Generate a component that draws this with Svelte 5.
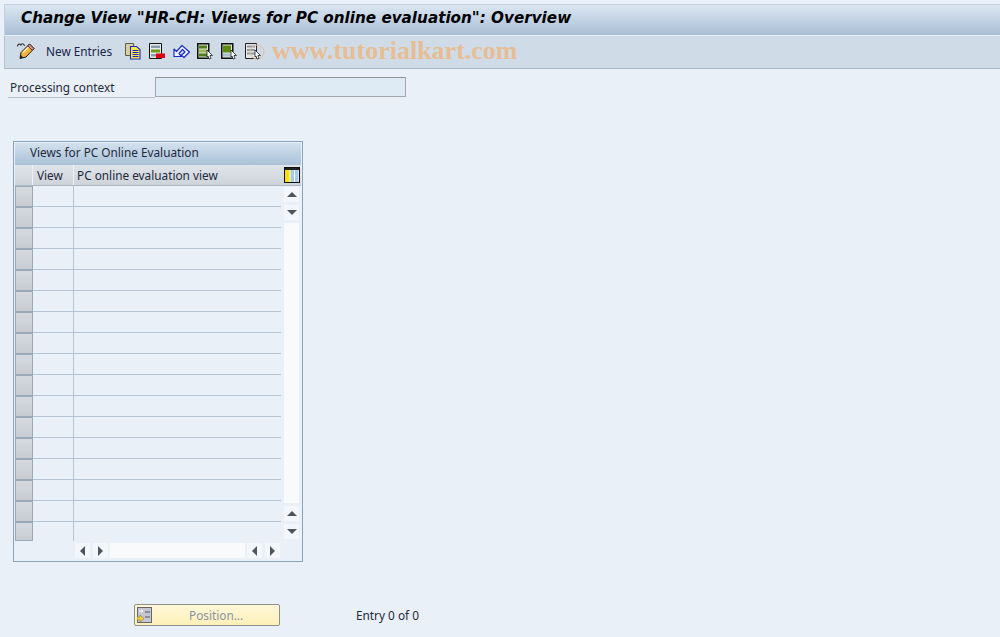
<script>
  const rows = Array.from({ length: 17 }, (_, i) => i);
</script>

<div class="screen">
  <div class="titlebar">
    <h1>Change View "HR-CH: Views for PC online evaluation": Overview</h1>
  </div>

  <div class="toolbar">
    <svg class="pencil" width="20" height="18" viewBox="0 0 20 18">
      <path d="M0.500 4.500c0-3 3-3 3.500-1 0-2.500 3-2.500 3.500 0.500" fill="none" stroke="#333" stroke-width="1.100"/>
      <path d="M3 16.500l1-6L12.500 2l4.500 4.500-8 8.500z" fill="#f6b23a" stroke="#1a1a1a" stroke-width="1"/>
      <path d="M6 10.500l7-7" stroke="#fff2b8" stroke-width="1.500"/>
      <path d="M12.500 2l4.500 4.500-1.800 1.800-4.500-4.500z" fill="#e8909a" stroke="#1a1a1a" stroke-width="0.800"/>
      <path d="M3 16.500l0.800-3.500 2.500 2.500z" fill="#222"/>
    </svg>
    <span class="tool-text">New Entries</span>
    <div class="icons">
      <svg width="24" height="17" viewBox="0 0 24 17">
        <path d="M0.500 0.500h8v3h-2v9h-6z" fill="#d8cfa0" stroke="#5c5c50"/>
        <path d="M5.500 3.500h6l3.500 3v9.500h-9.500z" fill="#ffe640" stroke="#1c2bc8" stroke-width="1.100"/>
        <path d="M7.500 7.500h6M7.500 9.500h6M7.500 11.500h6M7.500 13.500h6" stroke="#1c2bc8"/>
      </svg>
      <svg width="24" height="17" viewBox="0 0 24 17">
        <path d="M0.500 0.500h12v15h-12z" fill="#e8eaec" stroke="#111"/>
        <path d="M2 2.500h9v2.500H2zM2 11h5v2.500H2z" fill="#8a9aa8"/>
        <path d="M2 6.500h9v3H2z" fill="#6f9a18"/>
        <path d="M7 10.500h9v4.500H7z" fill="#e00010"/>
      </svg>
      <svg width="24" height="17" viewBox="0 0 24 17">
        <path d="M1 13.500V6l2.500 2.500L9 2.500l7.500 6.500-5.500 5.500-2.500-2.500 3.500-3-2.500-2.500-3.500 4 2.500 3z" fill="#f2f6fb" stroke="#1c2bc8" stroke-width="1.200" stroke-linejoin="round"/>
      </svg>
      <svg width="24" height="17" viewBox="0 0 24 17">
        <path d="M0.750 0.750h11v14.500h-11z" fill="#dfe3e0" stroke="#111" stroke-width="1.500"/>
        <path d="M2 2.500h8v3H2zM2 10.500h8v3H2z" fill="#4f7d18"/>
        <path d="M2 6.500h8v3H2z" fill="#9ab850"/>
        <path d="M10 7l5.500 5.500h-2.500l1 3-2 0.500-1-3-1 1z" fill="#fff" stroke="#222" stroke-width="0.800"/>
      </svg>
      <svg width="24" height="17" viewBox="0 0 24 17">
        <path d="M0.750 0.750h11v14.500h-11z" fill="#dfe3e0" stroke="#111" stroke-width="1.500"/>
        <path d="M2 2.500h8v7H2z" fill="#5f8a10"/>
        <path d="M2 10.500h8v3H2z" fill="#a8c0d0"/>
        <path d="M10 7l5.500 5.500h-2.500l1 3-2 0.500-1-3-1 1z" fill="#fff" stroke="#222" stroke-width="0.800"/>
      </svg>
      <svg width="24" height="17" viewBox="0 0 24 17">
        <path d="M0.500 0.500h11v15h-11z" fill="#e4e6e8" stroke="#222"/>
        <path d="M2 2.500h8v2H2zM2 6h8v2H2zM2 9.500h8v2H2z" fill="#8f9aa2"/>
        <circle cx="12" cy="9" r="7" fill="none" stroke="#e8bd94"/>
        <path d="M10 7l5.500 5.500h-2.500l1 3-2 0.500-1-3-1 1z" fill="#fff" stroke="#222" stroke-width="0.800"/>
      </svg>
    </div>
    <span class="watermark">www.tutorialkart.com</span>
  </div>

  <div class="content">
    <div class="context">
      <label for="ctx">Processing context</label>
      <input id="ctx" type="text" disabled />
    </div>

    <div class="table">
      <div class="table-title">Views for PC Online Evaluation</div>
      <div class="table-head">
        <div class="corner"></div>
        <div class="th view">View</div>
        <div class="th name">PC online evaluation view</div>
        <div class="config">
          <svg width="16" height="16" viewBox="0 0 16 16">
            <rect x="0.500" y="0.500" width="15" height="15" fill="#fff" stroke="#111"/>
            <rect x="1" y="1" width="14" height="2" fill="#222"/>
            <rect x="1" y="3" width="4.500" height="12" fill="#ffe000"/>
            <rect x="6.500" y="3" width="3.500" height="12" fill="#a8cbe8"/>
            <rect x="11" y="3" width="3.500" height="12" fill="#a8cbe8"/>
          </svg>
        </div>
      </div>
      <div class="table-body">
        <div class="rows">
          {#each rows as r}
            <div class="row">
              <div class="sel"></div>
              <div class="cell view"></div>
              <div class="cell name"></div>
            </div>
          {/each}
        </div>
        <div class="vscroll">
          <div class="sbtn"><span class="tri up"></span></div>
          <div class="sbtn"><span class="tri down"></span></div>
          <div class="track"></div>
          <div class="sbtn"><span class="tri up"></span></div>
          <div class="sbtn"><span class="tri down"></span></div>
        </div>
      </div>
      <div class="hscroll">
        <div class="sbtn"><span class="tri left"></span></div>
        <div class="sbtn"><span class="tri right"></span></div>
        <div class="htrack"></div>
        <div class="sbtn"><span class="tri left"></span></div>
        <div class="sbtn"><span class="tri right"></span></div>
      </div>
    </div>

    <div class="footer">
      <button class="position" disabled>
        <svg width="15" height="16" viewBox="0 0 15 16">
          <rect x="0.500" y="0.500" width="14" height="15" fill="#c4c6d6" stroke="#666"/>
          <path d="M8 5h5M8 10h5" stroke="#555"/>
          <path d="M2 4h4M4.500 2.500L6 4 4.500 5.500" stroke="#fff" fill="none"/>
          <path d="M0 10h3V8l4 3.500L3 15v-2H0z" fill="#f0cc40" stroke="#8a7420" stroke-width="0.500"/>
        </svg>
        <span>Position...</span>
      </button>
      <span class="entry">Entry 0 of 0</span>
    </div>
  </div>
</div>

<style>
  :global(body) {
    margin: 0;
    background: #e9f0f7;
  }
  .screen {
    width: 1000px;
    height: 637px;
    padding: 4px 0 0 4px;
    box-sizing: border-box;
    overflow: hidden;
    display: flex;
    flex-direction: column;
    font-family: "Noto Sans", "Open Sans", sans-serif;
    font-size: 11.8px;
    color: #1f2a3d;
    background: #e9f0f7;
  }
  .titlebar {
    height: 32px;
    box-sizing: border-box;
    border-top: 1px solid #c3d0dd;
    border-left: 1px solid #c3d0dd;
    border-bottom: 1px solid #e6eef5;
    background: linear-gradient(#dbe6f1, #a9bfd6);
    display: flex;
    align-items: center;
    padding: 0 0 4px 16px;
  }
  h1 {
    margin: 0;
    font-family: "DejaVu Sans", sans-serif;
    font-size: 15.2px;
    font-weight: bold;
    font-style: italic;
    color: #000;
    white-space: nowrap;
  }
  .toolbar {
    height: 33px;
    box-sizing: border-box;
    background: #cfdce8;
    border-left: 1px solid #b4c4d4;
    border-bottom: 1px solid #a7b7c8;
    display: flex;
    align-items: center;
    padding: 0 0 2px 12px;
  }
  .pencil {
    margin-right: 9px;
  }
  .tool-text {
    color: #1a2348;
    width: 79px;
  }
  .icons {
    display: flex;
    align-items: center;
  }
  .watermark {
    margin-left: 3px;
    font-family: "Liberation Serif", serif;
    font-size: 26px;
    font-weight: bold;
    color: #e8bd94;
    white-space: nowrap;
  }
  .content {
    flex: 1;
    display: flex;
    flex-direction: column;
  }
  .context {
    display: flex;
    align-items: stretch;
    margin: 8px 0 0 4px;
    height: 21px;
  }
  label {
    width: 147px;
    box-sizing: border-box;
    padding-left: 2px;
    line-height: 20px;
    border-bottom: 1px solid #b8bfc6;
    color: #1f2a3d;
  }
  input {
    width: 251px;
    height: 20px;
    box-sizing: border-box;
    margin: 0;
    padding: 0;
    border: 1px solid #a4a8ac;
    border-top-color: #8f9396;
    background: #deebf5;
  }
  .table {
    margin: 43px 0 0 9px;
    width: 290px;
    height: 421px;
    box-sizing: border-box;
    border: 1px solid #8aa3bd;
    padding: 1px;
    display: flex;
    flex-direction: column;
  }
  .table-title {
    height: 22px;
    line-height: 19px;
    box-sizing: border-box;
    padding-left: 15px;
    background: linear-gradient(#d3e1ee, #a9c1d8);
    color: #1f2a3d;
  }
  .table-head {
    height: 21px;
    display: flex;
    background: linear-gradient(#dfe4e9, #cdd4da);
    border-bottom: 1px solid #aeb8c2;
    box-sizing: border-box;
  }
  .corner {
    width: 18px;
    box-sizing: border-box;
    border-right: 1px solid #eef2f6;
  }
  .th {
    line-height: 21px;
    padding-left: 3px;
    box-sizing: border-box;
    border-right: 1px solid #eef2f6;
  }
  .th.view {
    width: 41px;
    padding-left: 4px;
  }
  .th.name {
    width: 208px;
    border-right: 0;
  }
  .config {
    flex: 1;
    display: flex;
    align-items: center;
    justify-content: center;
  }
  .table-body {
    display: flex;
    height: 355px;
  }
  .rows {
    width: 267px;
  }
  .row {
    display: flex;
    height: 21px;
  }
  .row:last-child {
    height: 19px;
  }
  .sel {
    width: 18px;
    box-sizing: border-box;
    border: 1px solid #9aa8b8;
    background: linear-gradient(#d6dadf, #c8ccd2);
  }
  .cell {
    box-sizing: border-box;
    border-bottom: 1px solid #b6c4d4;
    border-right: 1px solid #b6c4d4;
  }
  .cell.view {
    width: 41px;
  }
  .cell.name {
    width: 207px;
    border-right: 0;
  }
  .row:last-child .cell {
    border-bottom: 0;
  }
  .vscroll {
    width: 15px;
    margin-left: 2px;
    display: flex;
    flex-direction: column;
    gap: 3px;
    padding: 1px 0 2px;
    box-sizing: border-box;
  }
  .sbtn {
    width: 15px;
    height: 15px;
    background: #f3f6fa;
    display: flex;
    align-items: center;
    justify-content: center;
    flex: none;
  }
  .track {
    flex: 1;
    background: #f8fafc;
  }
  .tri {
    width: 0;
    height: 0;
    border-style: solid;
    border-color: transparent;
  }
  .tri.up {
    border-width: 0 5px 5px;
    border-bottom-color: #4c5661;
  }
  .tri.down {
    border-width: 5px 5px 0;
    border-top-color: #4c5661;
  }
  .tri.left {
    border-width: 5px 5px 5px 0;
    border-right-color: #4c5661;
  }
  .tri.right {
    border-width: 5px 0 5px 5px;
    border-left-color: #4c5661;
  }
  .hscroll {
    display: flex;
    gap: 3px;
    margin: 2px 0 0 60px;
    height: 15px;
  }
  .htrack {
    width: 135px;
    background: #f8fafc;
    margin: 0 -1px;
  }
  .footer {
    display: flex;
    align-items: center;
    margin: 42px 0 0 130px;
    height: 22px;
  }
  .position {
    width: 146px;
    height: 22px;
    box-sizing: border-box;
    padding: 0 0 0 2px;
    border: 1px solid #8f8f8f;
    border-radius: 2px;
    background: linear-gradient(#fff8d8, #fdf0b8);
    display: flex;
    align-items: center;
    font: inherit;
    color: #8a93a6;
  }
  .position span {
    margin-left: 37px;
  }
  .entry {
    margin-left: 76px;
    color: #1f2a3d;
  }
</style>
